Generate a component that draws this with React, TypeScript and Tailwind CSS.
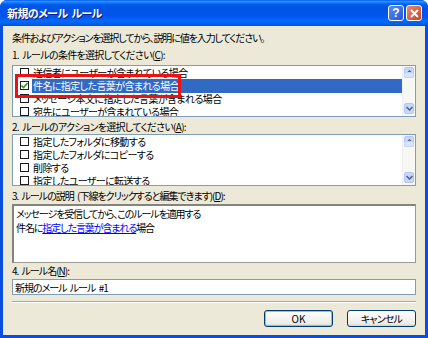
import React from "react";

const jp = "font-['MS_UI_Gothic','Noto_Sans_CJK_JP',sans-serif] [font-feature-settings:'palt']";

function Checkbox({ checked }: { checked?: boolean }) {
  return (
    <span className="w-[9px] h-[9px] shrink-0 border border-[#1c1c1c] bg-white flex items-center justify-center">
      {checked && (
        <svg width="7" height="7" viewBox="0 0 7 7">
          <path d="M0.5 3.5 L2.5 5.5 L6.5 1" stroke="#21a121" strokeWidth="1.6" fill="none" />
        </svg>
      )}
    </span>
  );
}

function ScrollBar() {
  return (
    <div className="w-[13px] shrink-0 bg-[#f7f7f3] flex flex-col justify-between border-l border-[#eef0f6]">
      <div className="h-[11px] mx-[1px] mt-[1px] rounded-[2px] bg-[#c6d6fc] border border-[#b3c7f3] flex items-center justify-center">
        <svg width="7" height="5" viewBox="0 0 7 5">
          <path d="M0.5 4 L3.5 1 L6.5 4" stroke="#4d6185" strokeWidth="1.5" fill="none" />
        </svg>
      </div>
      <div className="h-[6px] mx-[1px] -mt-[6px] mb-auto rounded-[2px] bg-[#d9e4fd] border border-[#c4d4f8]" />
      <div className="h-[11px] mx-[1px] mb-[2px] rounded-[2px] bg-[#c6d6fc] border border-[#b3c7f3] flex items-center justify-center">
        <svg width="7" height="5" viewBox="0 0 7 5">
          <path d="M0.5 1 L3.5 4 L6.5 1" stroke="#4d6185" strokeWidth="1.5" fill="none" />
        </svg>
      </div>
    </div>
  );
}

function Row({ text, selected, checked }: { text: string; selected?: boolean; checked?: boolean }) {
  return (
    <div className="h-[13px] shrink-0 flex items-center pl-[7px]">
      <Checkbox checked={checked} />
      <span
        className={
          selected
            ? "ml-[3px] h-[14px] flex-1 flex items-center pl-[1px] bg-[#316ac5] text-white"
            : "ml-[3px] pl-[1px] flex-1"
        }
      >
        {text}
      </span>
    </div>
  );
}

function ListBox({ rows, selectedIndex }: { rows: string[]; selectedIndex?: number }) {
  return (
    <div className="h-[52px] border border-[#7f9db9] bg-white flex overflow-hidden tracking-[-0.6px]">
      <div className="flex-1 flex flex-col overflow-hidden leading-[12px]">
        {rows.map((r, i) => (
          <Row key={r} text={r} selected={i === selectedIndex} checked={i === selectedIndex} />
        ))}
      </div>
      <ScrollBar />
    </div>
  );
}

function Label({ text, accel }: { text: string; accel: string }) {
  return (
    <div className="h-[14px] leading-[14px]">
      {text}(<span className="underline">{accel}</span>):
    </div>
  );
}

export default function App() {
  return (
    <div className={`w-[428px] h-[338px] flex flex-col bg-[#0a4ee0] rounded-t-[7px] overflow-hidden text-[10px] tracking-[-0.7px] [word-spacing:2px] text-black ${jp}`}>
      {/* title bar */}
      <div className="h-[26px] shrink-0 flex items-center pl-[7px] pr-[6px] bg-[linear-gradient(to_bottom,#0058ee_0%,#3593ff_6%,#127dff_10%,#0262ee_16%,#0057e5_22%,#0054e3_30%,#0055eb_60%,#005bf5_70%,#026afe_80%,#0062ef_88%,#0052d6_100%)]">
        <span className="text-white font-bold text-[11px] [text-shadow:1px_1px_0_#0a1f7a] tracking-[-0.6px]">新規のメール ルール</span>
        <div className="ml-auto flex gap-[2px] items-center">
          <div className="w-[16px] h-[16px] rounded-[3px] border border-white bg-[linear-gradient(135deg,#5b8cf0,#2456d8)] flex items-center justify-center text-white font-bold text-[12px] leading-none tracking-normal font-['Liberation_Sans',sans-serif]">
            ?
          </div>
          <div className="w-[16px] h-[16px] rounded-[3px] border border-white bg-[linear-gradient(135deg,#e98a6e,#cc4322)] flex items-center justify-center">
            <svg width="9" height="9" viewBox="0 0 9 9">
              <path d="M1 1 L8 8 M8 1 L1 8" stroke="white" strokeWidth="1.8" />
            </svg>
          </div>
        </div>
      </div>

      {/* body */}
      <div className="flex-1 mx-[3px] mb-[3px] bg-[#ece9d8] px-[9px] flex flex-col">
        <div className="mt-[5px] h-[14px] leading-[14px] tracking-[-1.1px]">
          条件およびアクションを選択してから、説明に値を入力してください。
        </div>

        <div className="mt-[3px]">
          <Label text="1. ルールの条件を選択してください" accel="C" />
        </div>
        <div className="mt-[3px] relative">
          <ListBox
            rows={[
              "送信者にユーザーが含まれている場合",
              "件名に指定した言葉が含まれる場合",
              "メッセージ本文に指定した言葉が含まれる場合",
              "宛先にユーザーが含まれている場合",
            ]}
            selectedIndex={1}
          />
          <div className="absolute left-[3px] top-[9px] w-[166px] h-[24px] border-[3px] border-[#ee1111]" />
        </div>

        <div className="mt-[3px]">
          <Label text="2. ルールのアクションを選択してください" accel="A" />
        </div>
        <div>
          <ListBox
            rows={[
              "指定したフォルダに移動する",
              "指定したフォルダにコピーする",
              "削除する",
              "指定したユーザーに転送する",
            ]}
          />
        </div>

        <div className="mt-[3px] tracking-[-1px]">
          <Label text="3. ルールの説明 (下線をクリックすると編集できます)" accel="D" />
        </div>
        <div className="mt-[1px] h-[59px] bg-white border-t-2 border-l-2 border-r border-b border-t-[#86847a] border-l-[#86847a] border-r-[#9d9b90] border-b-[#9d9b90] px-[2px] pt-[1px] leading-[14px] tracking-[-1.1px]">
          <div>メッセージを受信してから、このルールを適用する</div>
          <div>
            件名に<span className="text-[#0000ff] underline">指定した言葉が含まれる</span>場合
          </div>
        </div>

        <div className="mt-[1px] tracking-[-1px]">
          <Label text="4. ルール名" accel="N" />
        </div>
        <div className="mt-[1px] h-[16px] border border-[#7f9db9] bg-white flex items-center px-[2px] tracking-[-1px]">
          新規のメール ルール #1
        </div>

        <div className="mt-[6px] border-t border-[#aca899] border-b border-b-white" />

        <div className="mt-[7px] flex justify-end gap-[14px] tracking-normal">
          <button className="w-[69px] h-[17px] rounded-[3px] border border-[#003c74] bg-[linear-gradient(to_bottom,#ffffff,#ecebe6_85%,#d6d0c5)] shadow-[inset_0_0_0_1px_#98b8ea] flex items-center justify-center leading-none">
            OK
          </button>
          <button className="w-[69px] h-[17px] rounded-[3px] border border-[#003c74] bg-[linear-gradient(to_bottom,#ffffff,#ecebe6_85%,#d6d0c5)] flex items-center justify-center leading-none tracking-[-0.8px]">
            キャンセル
          </button>
        </div>
      </div>
    </div>
  );
}
